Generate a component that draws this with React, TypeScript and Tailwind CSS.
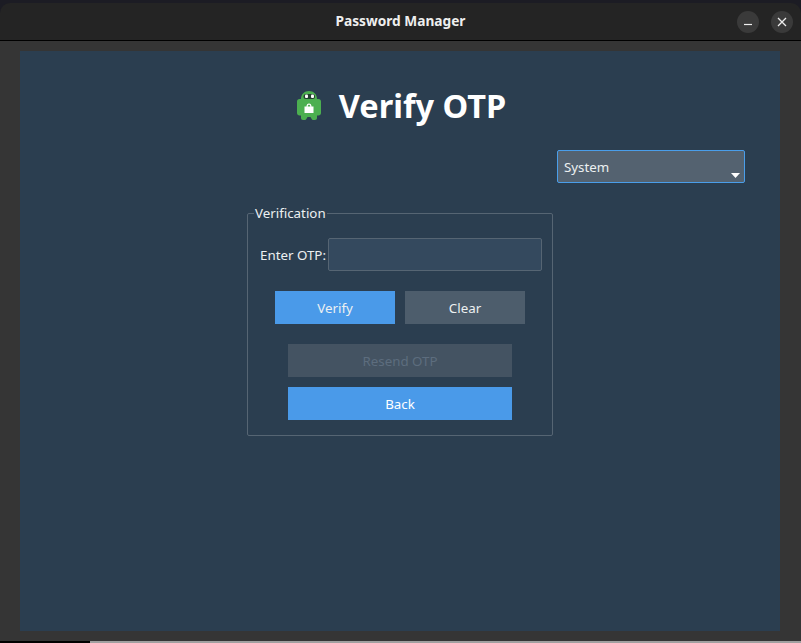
export default function App() {
  return (
    <div className="w-[801px] h-[643px] overflow-hidden bg-[#1c1c24] flex flex-col font-['Noto_Sans',sans-serif] text-[13.33px] text-[#ecf0f1]">
      <div className="h-[3px] shrink-0" />
      <div className="h-[37px] shrink-0 bg-[#242424] rounded-t-[10px] flex items-center relative">
        <div className="flex-1 text-center font-bold text-[13.7px] text-[#eeeeee]">Password Manager</div>
        <div className="absolute right-[8px] top-[8px] flex gap-[12px]">
          <div className="w-[22px] h-[22px] rounded-full bg-[#3a3a3a] flex items-center justify-center">
            <svg width="10" height="10" viewBox="0 0 10 10"><path d="M1 7.5h8" stroke="#eee" strokeWidth="1.2" /></svg>
          </div>
          <div className="w-[22px] h-[22px] rounded-full bg-[#3a3a3a] flex items-center justify-center">
            <svg width="10" height="10" viewBox="0 0 10 10"><path d="M1 1l8 8M9 1l-8 8" stroke="#eee" strokeWidth="1.3" /></svg>
          </div>
        </div>
      </div>
      <div className="h-px shrink-0 bg-black" />
      <div className="flex-1 bg-[#353535] pl-[20px] pr-[21px] pt-[10px]">
        <div className="h-[580px] bg-[#2b3e50] flex flex-col">
          <div className="h-[99px] shrink-0 flex items-center justify-center gap-[18px] pl-[3px] pt-[10px]">
            <svg width="24" height="29" viewBox="0 0 24 29">
              <path fill="#4caf50" d="M4 8C4 3 7.500 0 12 0s8 3 8 8h1.500C23 8 24 9 24 10.500V22c0 1.500-1 2.500-2.500 2.500H20V27c0 1.300-.8 2-2 2h-1.500c-1 0-1.500-.5-2-1.300L13.500 26h-3l-1 1.700c-.5.800-1 1.300-2 1.300H6c-1.200 0-2-.7-2-2v-2.500H2.500C1 24.500 0 23.500 0 22V10.500C0 9 1 8 2.500 8z" />
              <rect x="6.500" y="3" width="11.500" height="5" rx="2.500" fill="#23402f" />
              <rect x="8" y="3.500" width="3" height="3.500" rx="1" fill="#ffffff" />
              <rect x="14" y="3.500" width="3" height="3.500" rx="1" fill="#ffffff" />
              <path fill="#ffffff" d="M7.500 15.500h2c0-2 1-3 2.500-3s2.500 1 2.500 3h2V22h-9z" />
              <path fill="#4caf50" d="M10.700 15.500c0-1.200.5-1.800 1.300-1.800s1.300.6 1.300 1.800z" />
            </svg>
            <div className="font-bold text-[32.5px] leading-none text-white pt-[2px]">Verify OTP</div>
          </div>
          <div className="flex justify-end pr-[35px]">
            <div className="w-[188px] h-[33px] bg-[#546270] border border-[#4a9eea] rounded-[2px] flex items-center pl-[6px] relative">
              <span className="pt-[3px] text-[#ecf0f1]">System</span>
              <svg className="absolute right-[3px] bottom-[3px]" width="10" height="6" viewBox="0 0 10 6"><path d="M0 0h9L4.500 5z" fill="#fff" /></svg>
            </div>
          </div>
          <div className="flex justify-center pt-[21px]">
            <fieldset className="w-[306px] h-[232px] border border-[#566573] rounded-[2px] px-[10px]">
              <legend className="ml-[-4px] px-[1px] leading-[18px] text-[#ecf0f1]">Verification</legend>
              <div className="flex items-center justify-between pt-[16px]">
                <span className="pl-[2px] pt-[2px]">Enter OTP:</span>
                <div className="w-[214px] h-[33px] bg-[#34495e] border border-[#566573] rounded-[2px]" />
              </div>
              <div className="flex justify-center gap-[10px] mt-[20px]">
                <div className="w-[120px] h-[33px] pt-[2px] bg-[#4a9ae9] flex items-center justify-center">Verify</div>
                <div className="w-[120px] h-[33px] pt-[2px] bg-[#4d5d6c] flex items-center justify-center">Clear</div>
              </div>
              <div className="flex flex-col items-center gap-[10px] mt-[20px]">
                <div className="w-[224px] h-[33px] pt-[2px] bg-[#445362] text-[#5d6d7e] flex items-center justify-center">Resend OTP</div>
                <div className="w-[224px] h-[33px] pt-[2px] bg-[#4a9ae9] text-white flex items-center justify-center">Back</div>
              </div>
            </fieldset>
          </div>
        </div>
      </div>
      <div className="h-[2px] shrink-0 flex">
        <div className="w-[90px] bg-black" />
        <div className="flex-1 bg-[#a0a0a0]" />
      </div>
    </div>
  );
}
